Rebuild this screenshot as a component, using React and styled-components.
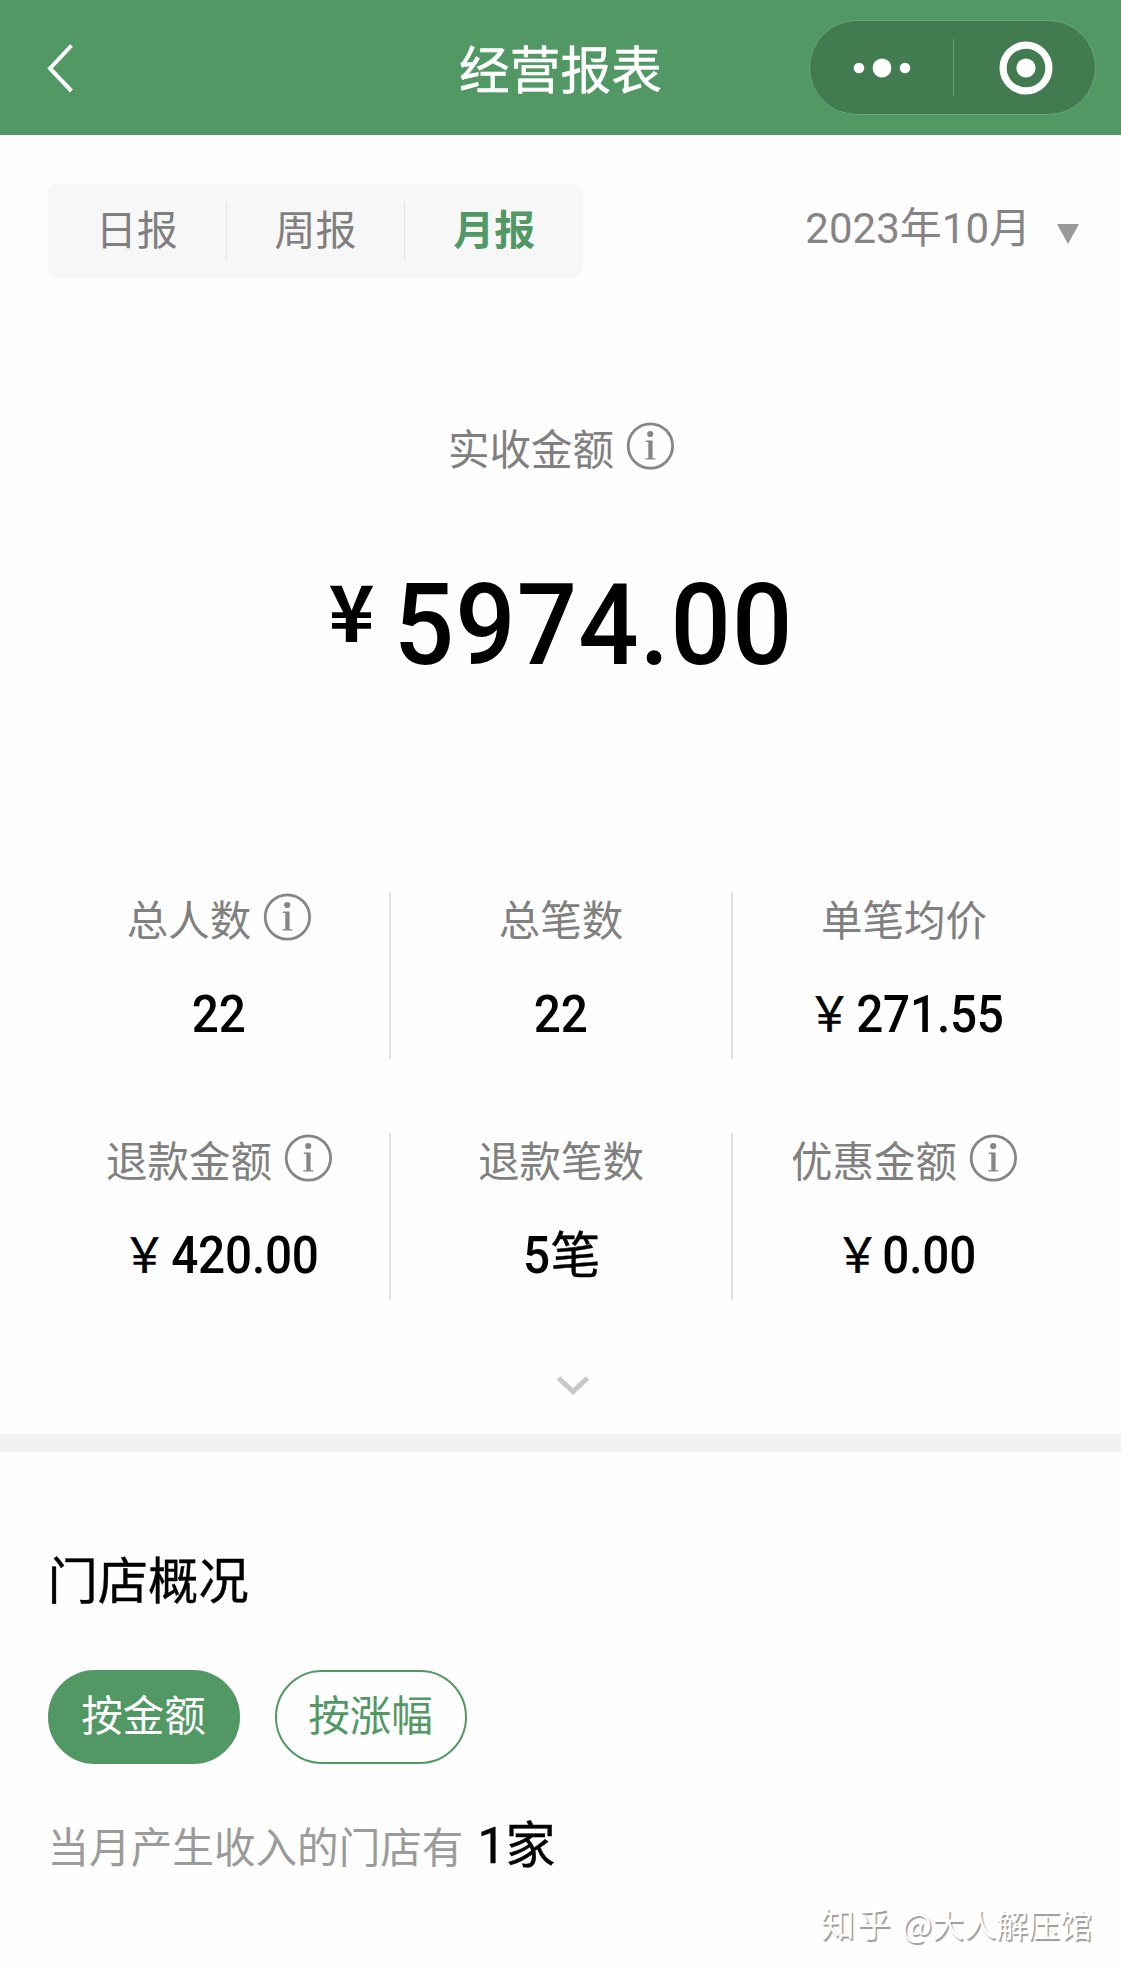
import React from "react";
import styled, { createGlobalStyle, css } from "styled-components";

const GREEN = "#529865";
const CJK = '"Noto Sans CJK SC", sans-serif';
const DIGITS = 'Roboto, "Noto Sans CJK SC", sans-serif';

const GlobalStyle = createGlobalStyle`
  * { box-sizing: border-box; }
  body { margin: 0; background: #fefefe; font-family: ${CJK}; }
`;

const Page = styled.div`
  width: 1121px;
  height: 1973px;
  display: flex;
  flex-direction: column;
  position: relative;
  overflow: hidden;
`;

const Header = styled.header`
  height: 135px;
  flex: none;
  display: grid;
  grid-template-columns: 312px 1fr 312px;
  align-items: center;
  background: ${GREEN};
`;

const BackIcon = styled.svg`
  width: 30px;
  height: 52px;
  margin-left: 45px;
`;

const Title = styled.h1`
  margin: -2px 0 0;
  font-size: 50.7px;
  font-weight: 400;
  line-height: 74px;
  color: #fff;
  text-align: center;
  -webkit-text-stroke: 0.5px #fff;
`;

const Capsule = styled.div`
  width: 287px;
  height: 95px;
  justify-self: end;
  margin-right: 25px;
  display: grid;
  grid-template-columns: 143px 1px 1fr;
  align-items: center;
  border: 1px solid #6aa77a;
  border-radius: 48px;
  background: #427b4f;
`;

const CapsuleHalf = styled.div`
  display: flex;
  justify-content: center;
  padding-left: ${(p) => p.$inset || 0}px;
`;

const CapsuleLine = styled.div`
  height: 57px;
  background: #6d9a77;
`;

const Toolbar = styled.div`
  display: flex;
  align-items: center;
  justify-content: space-between;
  margin: 48px 42px 0 48px;
  height: 95px;
`;

const Tabs = styled.div`
  display: flex;
  align-items: center;
  width: 535px;
  height: 95px;
  border-radius: 10px;
  background: #f7f7f7;
`;

const Tab = styled.div`
  flex: 1;
  height: 58px;
  line-height: 51px;
  text-align: center;
  font-size: 41px;
  color: ${(p) => (p.$active ? GREEN : "#7f7f7f")};
  font-weight: ${(p) => (p.$active ? 700 : 400)};
  & + & { border-left: 1px solid #e2e2e2; }
`;

const Month = styled.div`
  display: flex;
  align-items: center;
  gap: 26px;
  font: 400 42px/58px ${DIGITS};
  color: #858585;
`;

const MonthText = styled.span`
  margin-top: -3px;
`;

const Caret = styled.div`
  width: 22px;
  height: 20px;
  margin-top: 7px;
  background: #999;
  clip-path: polygon(0 0, 100% 0, 50% 100%);
`;

const Summary = styled.section`
  display: flex;
  flex-direction: column;
  align-items: center;
  height: 614px;
  padding-top: 143px;
`;

const LabelRow = styled.div`
  display: flex;
  align-items: center;
  justify-content: center;
  gap: 12px;
  height: 50px;
  font-size: 41.5px;
  line-height: 50px;
  color: #808080;
`;

const LabelText = styled.span`
  padding: 1px 0 0 1px;
`;

const InfoSvg = styled.svg`
  width: 48px;
  height: 48px;
  flex: none;
`;

const Total = styled.div`
  display: flex;
  align-items: flex-start;
  margin-top: 98px;
  padding-left: 14px;
  color: #000;
`;

const TotalYen = styled.span`
  font: 700 78px/80px ${CJK};
  margin: -1px 7px 0 0;
`;

const TotalDigits = styled.span`
  font: 500 113px/113px ${DIGITS};
  letter-spacing: 1.2px;
  transform: scaleX(0.94);
`;

const Stats = styled.section`
  display: grid;
  grid-template-columns: repeat(3, 342px);
  row-gap: 74px;
  margin-left: 48.5px;
`;

const Stat = styled.div`
  height: 167px;
  display: flex;
  flex-direction: column;
  align-items: center;
  ${(p) => p.$line && css`border-right: 2px solid #e3e3e3;`}
`;

const StatValue = styled.div`
  display: flex;
  align-items: baseline;
  margin-top: 43px;
  padding-left: 1px;
  font: 500 51px/60px ${DIGITS};
  color: #000;
`;

const StatDigits = styled.span`
  letter-spacing: -0.2px;
  transform: scaleX(0.935);
`;

const Yen = styled.span`
  width: 51px;
  text-align: center;
  font: 400 48px/1px ${CJK};
  -webkit-text-stroke: 0.6px #000;
  transform: translate(4px, -1px) scaleX(0.92);
`;

const Unit = styled.span`
  font: 400 50px/1px ${CJK};
  -webkit-text-stroke: 0.4px #000;
`;

const Expand = styled.div`
  height: 134px;
  flex: none;
  padding: 74px 0 0 555px;
  svg { display: block; }
`;

const Band = styled.div`
  height: 18px;
  flex: none;
  background: #f1f1f1;
`;

const Stores = styled.section`
  padding: 88px 48px 0 47.5px;
`;

const StoresTitle = styled.h2`
  margin: 0;
  font-size: 50.3px;
  line-height: 74px;
  font-weight: 400;
  color: #000;
  -webkit-text-stroke: 0.4px #000;
`;

const Pills = styled.div`
  display: flex;
  gap: 35px;
  margin-top: 56px;
`;

const Pill = styled.div`
  width: 192px;
  height: 94px;
  border-radius: 47px;
  border: 2px solid ${GREEN};
  line-height: 83px;
  text-align: center;
  font-size: 41.5px;
  color: ${(p) => (p.$active ? "#fff" : GREEN)};
  background: ${(p) => (p.$active ? GREEN : "transparent")};
`;

const Sentence = styled.div`
  display: flex;
  align-items: baseline;
  margin-top: 44px;
  font-size: 41.6px;
  line-height: 74px;
  color: #9b9b9b;
`;

const StoreCount = styled.span`
  margin-left: 14px;
  font: 400 50px/74px ${DIGITS};
  color: #000;
  -webkit-text-stroke: 0.4px #000;
`;

const Watermark = styled.div`
  position: absolute;
  right: 29px;
  bottom: 26px;
  display: flex;
  align-items: baseline;
  gap: 9px;
  font-size: 32px;
  line-height: 48px;
  color: #fff;
  text-shadow: 1.5px 1.5px 1px #999;
`;

const Brand = styled.span`
  font-size: 34px;
  letter-spacing: 2px;
`;

const InfoIcon = () => (
  <InfoSvg viewBox="0 0 48 48" fill="none">
    <circle cx="24.4" cy="24" r="22.2" stroke="#868686" strokeWidth="2.8" />
    <circle cx="24.2" cy="12" r="3.1" fill="#868686" />
    <path d="M19.8 18.4H26.6V36.2H29.4V37.6H19.4V36.2H22.3V20H19.8Z" fill="#868686" />
  </InfoSvg>
);

const Label = ({ text, info }) => (
  <LabelRow>
    <LabelText>{text}</LabelText>
    {info && <InfoIcon />}
  </LabelRow>
);

const stats = [
  { label: "总人数", info: true, value: "22" },
  { label: "总笔数", value: "22" },
  { label: "单笔均价", yen: true, value: "271.55" },
  { label: "退款金额", info: true, yen: true, value: "420.00" },
  { label: "退款笔数", value: "5", unit: "笔" },
  { label: "优惠金额", info: true, yen: true, value: "0.00" },
];

export default function App() {
  return (
    <Page>
      <GlobalStyle />
      <Header>
        <BackIcon viewBox="0 0 30 52" fill="none" stroke="#fff" strokeWidth="4">
          <path d="M26.5 3.5L5 26.5L26.5 49" />
        </BackIcon>
        <Title>经营报表</Title>
        <Capsule>
          <CapsuleHalf>
            <svg width="60" height="24" viewBox="0 0 60 24" fill="#fff">
              <circle cx="7" cy="12" r="5.3" />
              <circle cx="30" cy="12" r="9.4" />
              <circle cx="53" cy="12" r="5.3" />
            </svg>
          </CapsuleHalf>
          <CapsuleLine />
          <CapsuleHalf $inset={3}>
            <svg width="56" height="56" viewBox="0 0 56 56" fill="none">
              <circle cx="28" cy="28" r="22.9" stroke="#fff" strokeWidth="7.2" />
              <circle cx="28" cy="28" r="9.6" fill="#fff" />
            </svg>
          </CapsuleHalf>
        </Capsule>
      </Header>

      <Toolbar>
        <Tabs>
          <Tab>日报</Tab>
          <Tab>周报</Tab>
          <Tab $active>月报</Tab>
        </Tabs>
        <Month>
          <MonthText>2023年10月</MonthText>
          <Caret />
        </Month>
      </Toolbar>

      <Summary>
        <Label text="实收金额" info />
        <Total>
          <TotalYen>¥</TotalYen>
          <TotalDigits>5974.00</TotalDigits>
        </Total>
      </Summary>

      <Stats>
        {stats.map((s, i) => (
          <Stat key={s.label} $line={i % 3 !== 2}>
            <Label text={s.label} info={s.info} />
            <StatValue>
              {s.yen && <Yen>￥</Yen>}
              <StatDigits>{s.value}</StatDigits>
              {s.unit && <Unit>{s.unit}</Unit>}
            </StatValue>
          </Stat>
        ))}
      </Stats>

      <Expand>
        <svg width="36" height="24" viewBox="0 0 36 24" fill="none" stroke="#c8c8cc" strokeWidth="5">
          <path d="M3.5 4L18 17.5L32.5 4" />
        </svg>
      </Expand>
      <Band />

      <Stores>
        <StoresTitle>门店概况</StoresTitle>
        <Pills>
          <Pill $active>按金额</Pill>
          <Pill>按涨幅</Pill>
        </Pills>
        <Sentence>
          当月产生收入的门店有<StoreCount>1家</StoreCount>
        </Sentence>
      </Stores>

      <Watermark>
        <Brand>知乎</Brand>
        <span>@大人解压馆</span>
      </Watermark>
    </Page>
  );
}
